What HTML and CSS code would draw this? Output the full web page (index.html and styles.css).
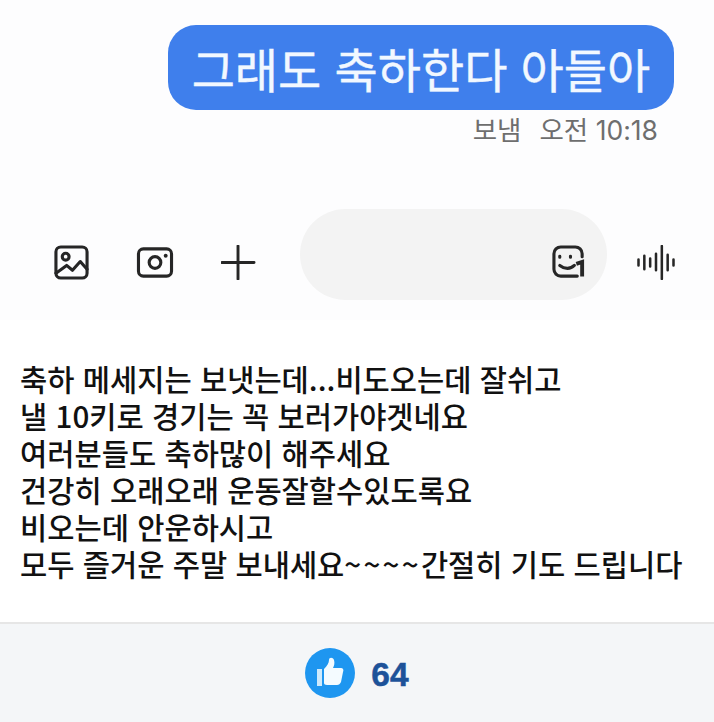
FILE: index.html
```html
<!DOCTYPE html>
<html lang="ko">
<head>
<meta charset="utf-8">
<title>축하 메세지</title>
<link rel="stylesheet" href="styles.css">
</head>
<body>
<section class="shot">
  <div class="bubble-row"><div class="bubble">그래도 축하한다 아들아</div></div>
  <div class="meta"><span>보냄</span><span>오전 10:18</span></div>
  <div class="composer">
    <svg class="ico" viewBox="0 0 36 36"><rect x="2" y="2" width="32" height="32" rx="5"/><circle cx="12" cy="12" r="3.5"/><path d="M2 29l11-8 6 5 8-9 7 8"/></svg>
    <svg class="ico cam" viewBox="0 0 38 36"><rect x="2" y="4" width="34" height="28" rx="5"/><circle cx="19" cy="18" r="6"/><circle class="dot" cx="30" cy="11" r="2"/></svg>
    <svg class="ico plus" viewBox="0 0 36 36"><path d="M1 18h33M17.500 1v34"/></svg>
    <div class="field">
      <svg class="ico" viewBox="0 0 36 36"><path d="M31 12V9a7 7 0 0 0-7-7H9a7 7 0 0 0-7 7v16a7 7 0 0 0 7 7h17"/><path d="M8 11.500v1M19 11.500v1"/><path d="M8 21c5 4 11 4 15 0"/><path class="one" d="M25 19.500l6-2v15"/></svg>
    </div>
    <svg class="ico wave" viewBox="0 0 40 36"><path d="M2 15v6M8 11v14M14 14v8M20 9v17M26 1v34M32 10v16M38 15v6"/></svg>
  </div>
</section>
<article class="post">
  <p>축하 메세지는 보냇는데...비도오는데 잘쉬고</p>
  <p>낼 10키로 경기는 꼭 보러가야겟네요</p>
  <p>여러분들도 축하많이 해주세요</p>
  <p>건강히 오래오래 운동잘할수있도록요</p>
  <p>비오는데 안운하시고</p>
  <p>모두 즐거운 주말 보내세요<span class="tilde">~~~~</span>간절히 기도 드립니다</p>
</article>
<footer class="likes">
  <svg class="thumb" viewBox="0 0 50 50"><circle cx="25" cy="25" r="25"/><path class="t t2" d="M12 21h5v17h-5z"/><path class="t" d="M19 21c3-3 5-6 5-9 0-3 4-3 5 0 1 3 0 6-1 8h8c2 0 3 2 2 4l-2 10c-1 2-2 3-4 3H22c-2 0-3-1-3-2z"/></svg>
  <span class="count">64</span>
</footer>
</body>
</html>
```
FILE: styles.css
```css
* { box-sizing: border-box; }
html, body { margin: 0; padding: 0; }
body { width: 714px; height: 722px; background: #fff; display: flex; flex-direction: column; font-family: "Noto Sans CJK KR", "Noto Sans", sans-serif; overflow: hidden; }
.shot { height: 320px; padding-top: 25px; background: #fdfdfe; }
.bubble-row { display: flex; justify-content: flex-end; padding-right: 40px; }
.bubble { width: 506px; height: 85px; border-radius: 28px; background: #3f7fec; color: #f2f8ff; font-size: 47px; line-height: 85px; text-align: center; white-space: nowrap; -webkit-text-stroke: 0.4px #f2f8ff; }
.meta { display: flex; justify-content: flex-end; gap: 18px; padding: 3px 56px 0 0; color: #6e6e6e; font-family: Inter, "Noto Sans CJK KR", sans-serif; font-size: 26.500px; line-height: 34px; }
.composer { display: flex; align-items: center; margin-top: 62px; height: 91px; padding-left: 54px; }
.ico { width: 35px; height: 35px; fill: none; stroke: #262626; stroke-width: 3.2; stroke-linecap: round; stroke-linejoin: round; flex: none; margin-top: 16px; }
.cam { width: 38px; margin-left: 47px; }
.plus { margin-left: 47px; stroke-width: 3; }
.field { width: 307px; height: 91px; margin-left: 44px; border-radius: 46px; background: #f3f3f3; display: flex; align-items: center; justify-content: flex-end; padding-right: 20px; }
.wave { width: 40px; margin-left: 29px; stroke-width: 2.6; }
.dot { fill: #262626; stroke: none; }
.one { stroke-width: 4; stroke-linecap: butt; stroke-linejoin: miter; }
.post { flex: 1; padding: 40px 0 0 20px; font-size: 29.6px; font-weight: 500; line-height: 37px; color: #111; }
.post p { margin: 0; white-space: nowrap; }
.tilde { letter-spacing: 2.2px; }
.likes { height: 100px; background: #f4f6f8; border-top: 2px solid #e6e6e6; display: flex; align-items: center; justify-content: center; gap: 16px; }
.thumb { width: 50px; height: 50px; flex: none; }
.thumb circle { fill: #1e96f0; }
.t { fill: #f4fbff; }
.t2 { fill: #cfeafc; }
.count { font-family: "Liberation Sans", sans-serif; font-weight: 700; font-size: 33.500px; color: #1d5299; padding-top: 4px; -webkit-text-stroke: 0.5px #1d5299; }
```
